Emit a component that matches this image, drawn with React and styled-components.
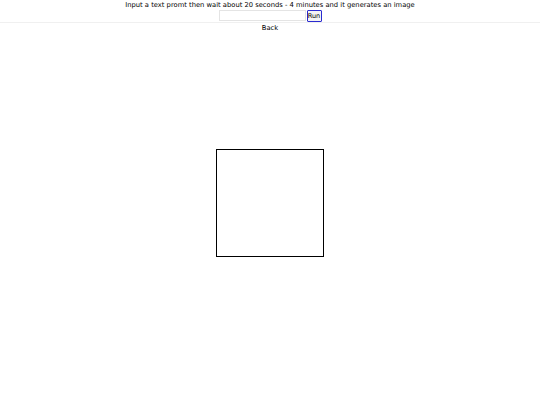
import React, { useState } from 'react'
import styled, { createGlobalStyle } from 'styled-components'

const GlobalStyle = createGlobalStyle`
  html, body {
    margin: 0;
    padding: 0;
    background: #ffffff;
  }
  body {
    font-family: "DejaVu Sans", sans-serif;
    color: #000;
  }
`

const Page = styled.div`
  display: flex;
  flex-direction: column;
  align-items: center;
  min-height: 100vh;
`

const Header = styled.header`
  width: 100%;
  display: flex;
  flex-direction: column;
  align-items: center;
  border-bottom: 1px solid #f0f0f0;
`

const Prompt = styled.p`
  margin: 0;
  padding-top: 1px;
  font-size: 6.75px;
  line-height: 9px;
`

const Form = styled.form`
  display: flex;
  align-items: stretch;
  gap: 1px;
  height: 12px;
`

const TextInput = styled.input`
  width: 87px;
  height: 11px;
  box-sizing: border-box;
  border: 1px solid #e4e4e4;
  padding: 0 2px;
  font-size: 7px;
  outline: none;
`

const RunButton = styled.button`
  box-sizing: border-box;
  height: 12px;
  width: 15px;
  padding: 0;
  border: 1.5px solid #2b2bd0;
  border-radius: 1px;
  background: #f4f4f4;
  font-family: "DejaVu Sans", sans-serif;
  font-size: 6.5px;
  line-height: 8px;
  color: #000;
`

const BackLink = styled.a`
  margin-top: 1px;
  font-size: 6.75px;
  line-height: 9px;
  color: #000;
  text-decoration: none;
`

const Canvas = styled.div`
  margin-top: 116px;
  width: 106px;
  height: 106px;
  border: 1px solid #000;
  background: #fff;
`

export default function App() {
  const [prompt, setPrompt] = useState('')

  return (
    <>
      <GlobalStyle />
      <Page>
        <Header>
          <Prompt>Input a text promt then wait about 20 seconds - 4 minutes and it generates an image</Prompt>
          <Form onSubmit={(e) => e.preventDefault()}>
            <TextInput value={prompt} onChange={(e) => setPrompt(e.target.value)} />
            <RunButton type="submit">Run</RunButton>
          </Form>
        </Header>
        <BackLink href="#">Back</BackLink>
        <Canvas />
      </Page>
    </>
  )
}
